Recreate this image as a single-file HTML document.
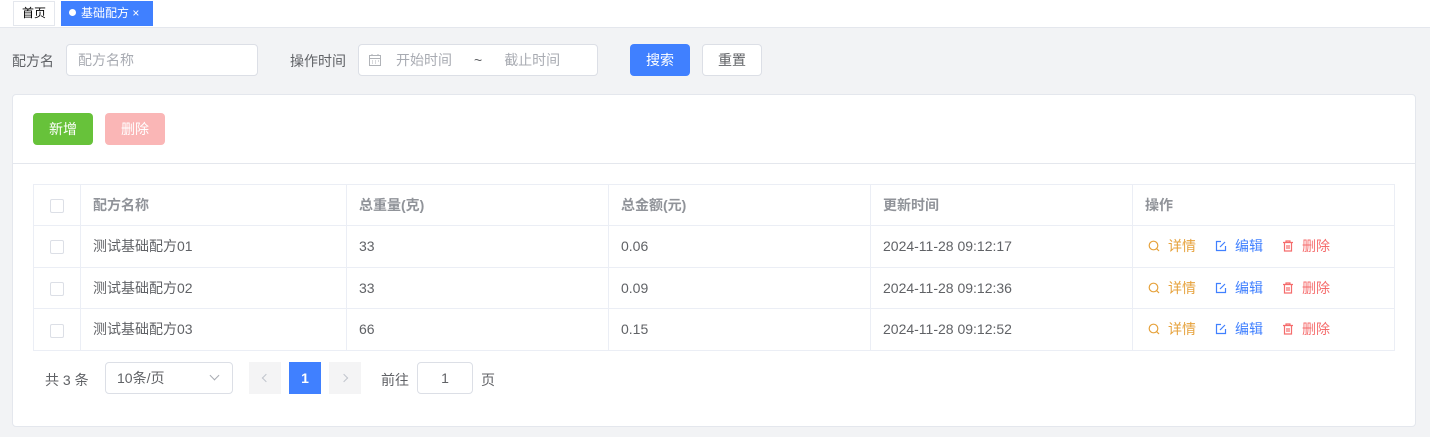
<!DOCTYPE html><html><head><meta charset="utf-8"><style>
*{box-sizing:border-box;margin:0;padding:0}
body{width:1430px;height:437px;background:#f2f3f5;font-family:"Liberation Sans","Noto Sans CJK SC",sans-serif;font-size:14px;color:#606266;position:relative;overflow:hidden}
.a{position:absolute}
.inp{position:absolute;background:#fff;border:1px solid #dcdfe6;border-radius:4px;color:#a8abb2;font-size:14px;line-height:30px}
.btn{position:absolute;border-radius:4px;text-align:center;line-height:32px;font-size:14px}
table{position:absolute;left:33px;top:184px;width:1362px;border-collapse:collapse;background:#fff}
td,th{border:1px solid #ebeef5;height:41.6px;padding:0 12px;text-align:left;font-weight:normal;font-size:14px;color:#606266}
th{font-weight:bold;color:#909399;height:41px}
.cb{display:inline-block;width:14px;height:14px;border:1px solid #dcdfe6;border-radius:2px;vertical-align:middle;margin-left:4px}
.op{padding-left:15px}
.op span{margin-right:19px;font-size:14px}
.op svg{vertical-align:-1px;margin-right:8px}
.chev{position:absolute;top:13px;width:6px;height:6px;border-left:1px solid #c0c4cc;border-bottom:1px solid #c0c4cc}
</style></head><body>
<div class="a" style="left:0;top:0;width:1430px;height:28px;background:#fff;border-bottom:1px solid #e4e7ed"></div>
<div class="a" style="left:13px;top:1px;width:42px;height:25px;border:1px solid #e4e7ed;line-height:23px;text-align:center;font-size:12px;color:#000">首页</div>
<div class="a" style="left:61px;top:1px;width:92px;height:25px;background:#4080ff;color:#fff;line-height:25px;font-size:12px;padding-left:8px"><span style="display:inline-block;width:7px;height:7px;border-radius:50%;background:#fff;margin-right:5px;vertical-align:1px"></span>基础配方 ×</div>

<div class="a" style="left:12px;top:51px;color:#606266">配方名</div>
<div class="inp" style="left:66px;top:44px;width:192px;height:32px;padding-left:11px">配方名称</div>
<div class="a" style="left:290px;top:51px;color:#606266">操作时间</div>
<div class="inp" style="left:358px;top:44px;width:240px;height:32px;padding-left:10px"><svg width="12" height="12" viewBox="0 0 12 12" fill="none" stroke="#b0b3b8" style="vertical-align:-1px"><rect x="0.5" y="1.5" width="11" height="10"/><path d="M0.5 4.5H11.5M3 1V0M9 1V0M3 7H4M6 7H7M9 7H10M3 9H4M6 9H7"/></svg><span style="margin-left:15px">开始时间</span><span style="margin-left:22px;color:#606266">~</span><span style="margin-left:22px">截止时间</span></div>
<div class="btn" style="left:630px;top:44px;width:60px;height:32px;background:#4080ff;color:#fff">搜索</div>
<div class="btn" style="left:702px;top:44px;width:60px;height:32px;background:#fff;border:1px solid #dcdfe6;color:#606266;line-height:30px">重置</div>

<div class="a" style="left:12px;top:94px;width:1404px;height:333px;background:#fff;border:1px solid #e4e7ed;border-radius:4px"></div>
<div class="btn" style="left:33px;top:113px;width:60px;height:32px;background:#67c23a;color:#fff">新增</div>
<div class="btn" style="left:105px;top:113px;width:60px;height:32px;background:#fab6b6;color:#fff">删除</div>
<div class="a" style="left:13px;top:163px;width:1402px;height:1px;background:#e4e7ed"></div>

<table>
<tr><th style="width:47px"><span class="cb"></span></th><th style="width:266px">配方名称</th><th style="width:262px">总重量(克)</th><th style="width:262px">总金额(元)</th><th style="width:262px">更新时间</th><th>操作</th></tr>
<tr><td><span class="cb"></span></td><td>测试基础配方01</td><td>33</td><td>0.06</td><td>2024-11-28 09:12:17</td><td class="op">OPS</td></tr>
<tr><td><span class="cb"></span></td><td>测试基础配方02</td><td>33</td><td>0.09</td><td>2024-11-28 09:12:36</td><td class="op">OPS</td></tr>
<tr><td><span class="cb"></span></td><td>测试基础配方03</td><td>66</td><td>0.15</td><td>2024-11-28 09:12:52</td><td class="op">OPS</td></tr>
</table>

<div class="a" style="left:45px;top:370px">共 3 条</div>
<div class="inp" style="left:105px;top:362px;width:128px;height:32px;padding-left:11px;color:#606266">10条/页<span style="position:absolute;right:14px;top:9px;width:7px;height:7px;border-right:1px solid #a8abb2;border-bottom:1px solid #a8abb2;transform:rotate(45deg)"></span></div>
<div class="a" style="left:249px;top:362px;width:32px;height:32px;background:#f4f4f5"><span class="chev" style="left:14px;transform:rotate(45deg)"></span></div>
<div class="a" style="left:289px;top:362px;width:32px;height:32px;background:#4080ff;color:#fff;text-align:center;line-height:32px;font-weight:bold">1</div>
<div class="a" style="left:329px;top:362px;width:32px;height:32px;background:#f4f4f5"><span class="chev" style="left:12px;transform:rotate(-135deg)"></span></div>
<div class="a" style="left:381px;top:370px">前往</div>
<div class="inp" style="left:417px;top:362px;width:56px;height:32px;text-align:center;color:#606266">1</div>
<div class="a" style="left:481px;top:370px">页</div>
<script>
var ops='<span style="color:#e6a23c"><svg width="12" height="12" viewBox="0 0 12 12" fill="none" stroke="#e6a23c" stroke-width="1.2"><circle cx="5.5" cy="5.5" r="4.3"/><path d="M8.6 8.6L11 11"/></svg>详情</span><span style="color:#4080ff"><svg width="12" height="12" viewBox="0 0 12 12" fill="none" stroke="#4080ff" stroke-width="1.2"><path d="M6 1.5H1.5V10.5H10.5V6"/><path d="M5 7L10 2"/></svg>编辑</span><span style="color:#f56c6c"><svg width="12" height="12" viewBox="0 0 12 12" fill="none" stroke="#f56c6c" stroke-width="1.2"><path d="M1 2.5H11M4 2.5V1H8V2.5M2.5 2.5V11H9.5V2.5M5 5V9M7 5V9"/></svg>删除</span>';
document.querySelectorAll('.op').forEach(function(e){e.innerHTML=ops});
</script>
</body></html>
